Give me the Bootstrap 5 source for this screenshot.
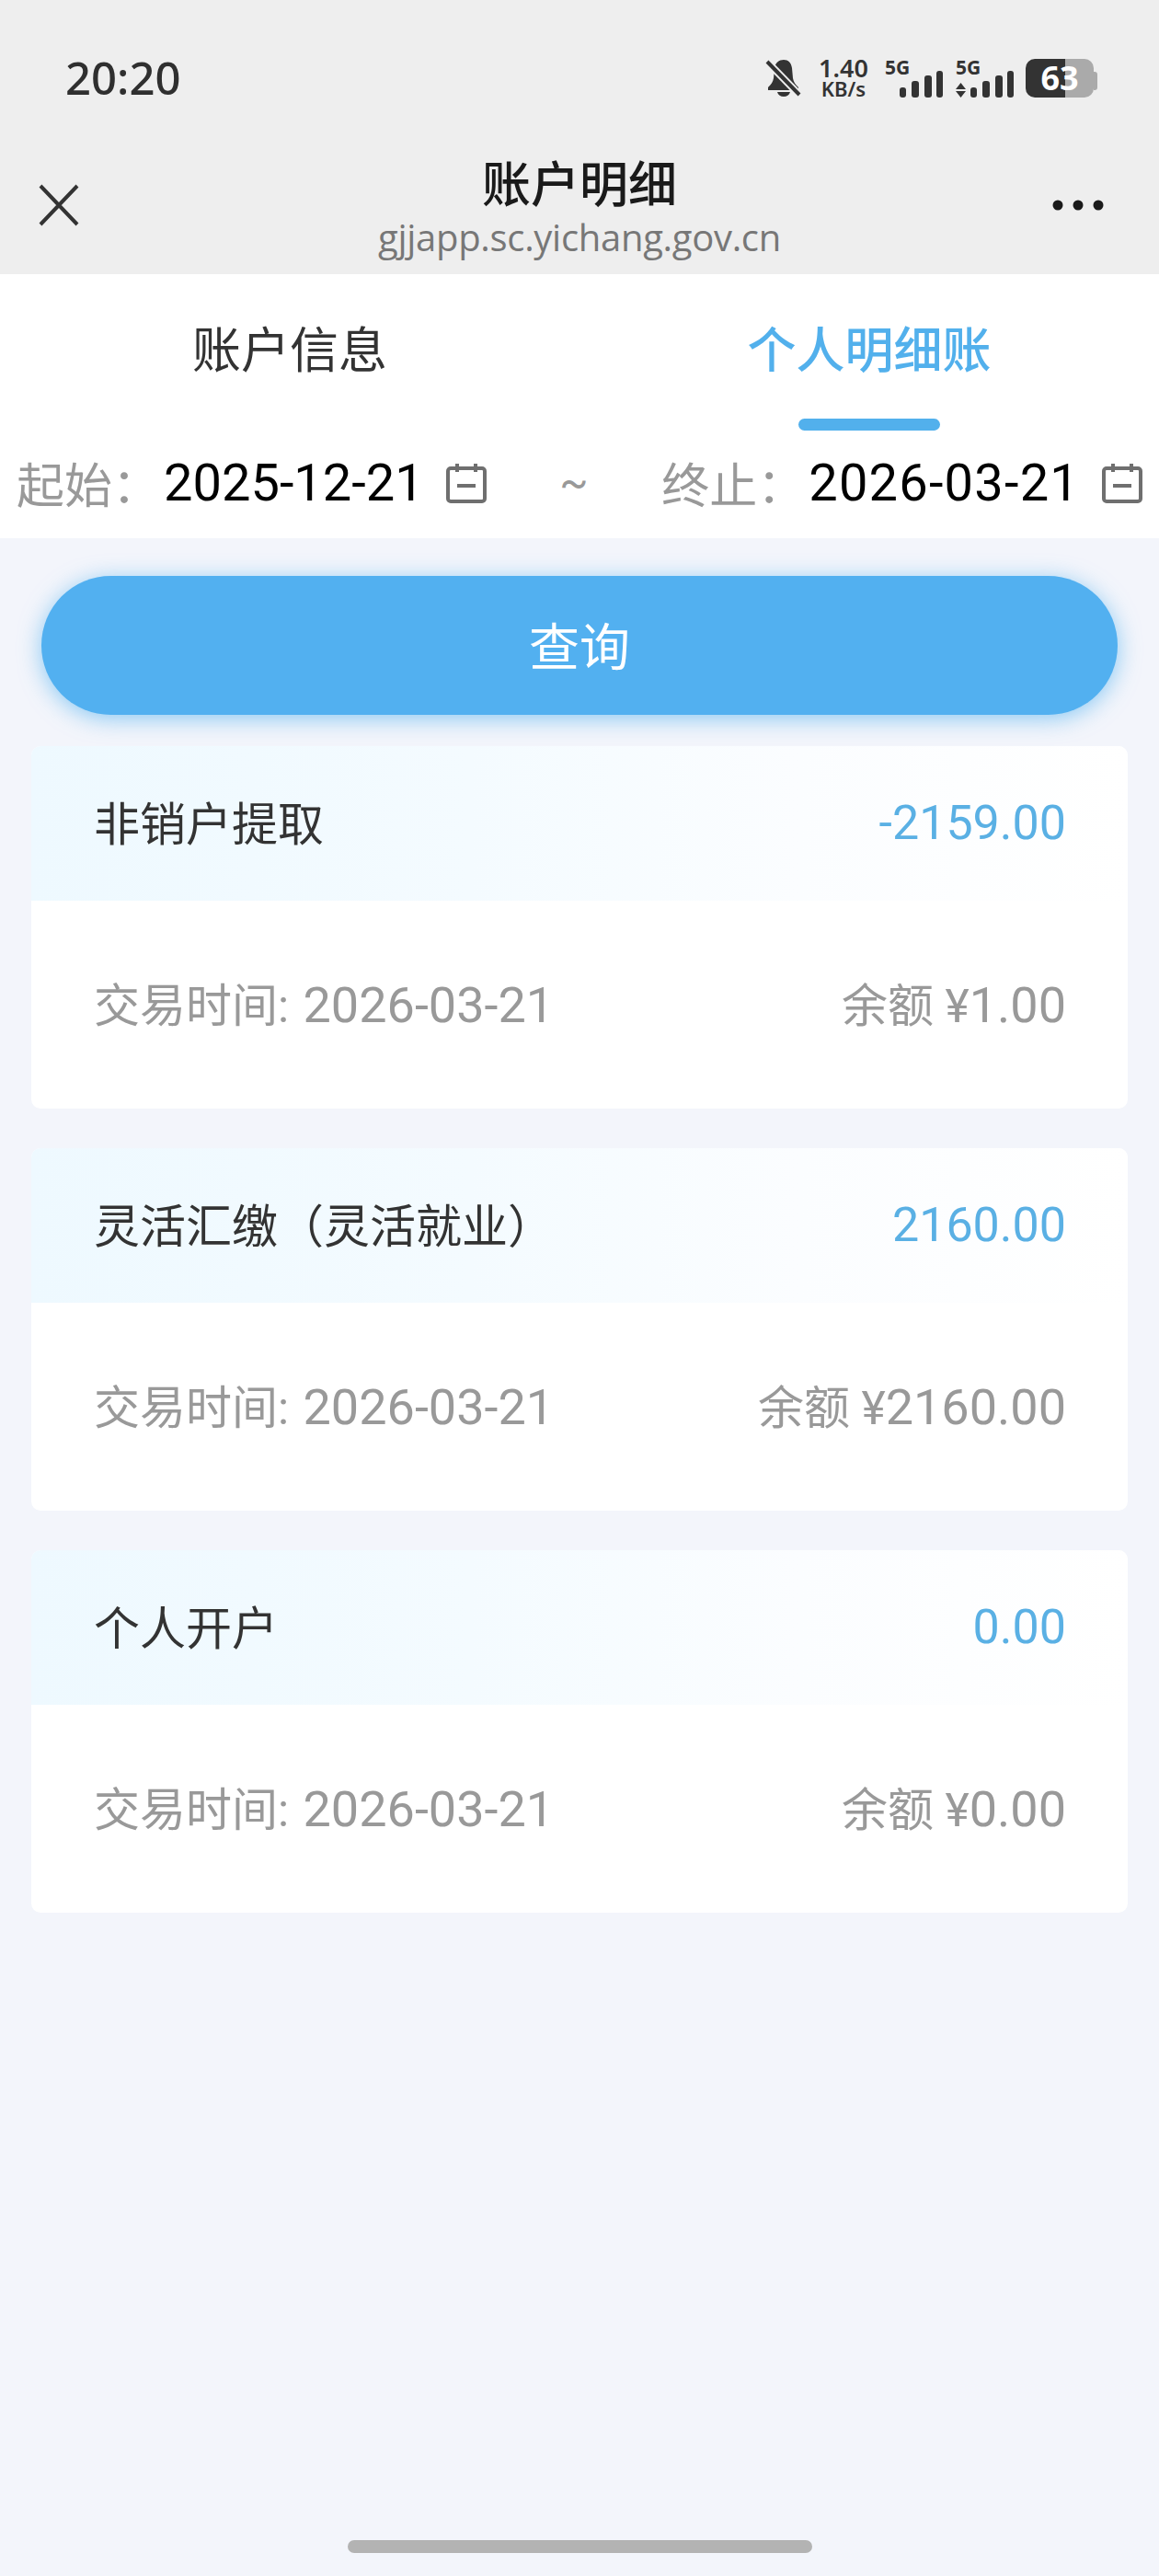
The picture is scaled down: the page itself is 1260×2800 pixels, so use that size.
<!DOCTYPE html>
<html lang="zh-CN">
<head>
  <meta charset="UTF-8" />
  <meta name="viewport" content="width=device-width, initial-scale=1.0"/>
  <title>账户明细</title>
  <link href="https://cdn.jsdelivr.net/npm/bootstrap@5.3.0/dist/css/bootstrap.min.css" rel="stylesheet"/>
  <script src="https://cdn.jsdelivr.net/npm/bootstrap@5.3.0/dist/js/bootstrap.bundle.min.js"></script>
<style>
  body {
    background: #f3f5fb;
    min-height: 2800px;
    font-family: Roboto, "Noto Sans CJK SC", sans-serif;
    display: flex;
    flex-direction: column;
  }

  /* barra de arriba */
  .top-head { background: #eeeeee; height: 298px; }
  .status-row { height: 168px; padding: 0 67px 0 71px; }
  .clock { font: 500 49px/1 "Noto Sans", sans-serif; color: #2f2f2f; }
  .speed { width: 56px; color: #333; text-align: center; font-family: "Noto Sans", sans-serif; font-weight: 600; margin: 0 17px; }
  .speed-num { font-size: 27px; line-height: 24px; }
  .speed-unit { font-size: 22px; line-height: 20px; }
  .sig-icon { overflow: visible; }
  .sig-gap { margin-left: 14px; }
  .battery {
    width: 74px; height: 42px; border-radius: 10px; margin-left: 13px;
    background: linear-gradient(90deg, #333 58%, #aaa 58%);
    color: #fff; font: 700 36px/42px "Noto Sans", sans-serif; text-align: center;
  }
  .battery-nub { width: 4px; height: 20px; background: #aaa; border-radius: 0 3px 3px 0; }
  .nav-row { height: 130px; padding: 0 60px 20px 42px; }
  .close-wrap { width: 74px; }
  .nav-title { font-size: 53px; line-height: 60px; color: #1a1a1a; font-family: "Noto Sans CJK SC", sans-serif; font-weight: 500; margin-bottom: 9px; }
  .nav-url { font: 40px/44px "Open Sans", sans-serif; color: #777; letter-spacing: -0.3px; }

  /* pestañas */
  .tab-row { height: 170px; }
  .tab-item {
    font-family: "Noto Sans CJK SC", sans-serif;
    font-size: 53px; line-height: 60px; color: #333; padding-top: 49px;
  }
  .tab-on { color: #52b0ec; font-weight: 500; }
  .tab-line { width: 154px; height: 13px; border-radius: 7px; background: #52b0ec; margin-top: 48px; }
  .tab-line-off { background: transparent; }

  /* fechas */
  .date-row { height: 117px; padding: 0 18px 4px 18px; }
  .date-label { font-family: "Noto Sans CJK SC", sans-serif; font-size: 52px; color: #999; width: 160px; }
  .date-value { font-size: 56px; color: #000; margin-right: 24px; }
  .date-wide { letter-spacing: 1.2px; }
  .date-sep { font-size: 46px; color: #999; }

  .query-btn {
    height: 151px; border-radius: 76px; border: 0;
    background: #52b0f0; color: #fff;
    font-family: "Noto Sans CJK SC", sans-serif; font-size: 55px;
    box-shadow: 0 4px 24px rgba(82, 176, 240, .65);
    margin: 41px 11px 34px;
    padding-bottom: 10px;
  }
  .query-btn:hover { background: #52b0f0; color: #fff; }

  /* tarjetas */
  .list-wrap { padding: 0 34px; }
  .item-card { border: 0; border-radius: 10px; margin-bottom: 43px; overflow: hidden; height: 394px; }
  .item-head {
    height: 168px; padding: 0 67px 0 68px;
    background: linear-gradient(90deg, #eef9ff 0%, #f4fbff 40%, #fbfdff 70%, #fff 100%);
  }
  .item-name { font-family: "Noto Sans CJK SC", sans-serif; font-size: 50px; color: #333; margin-top: -6px; }
  .item-amount { font-size: 52px; color: #5ab0e4; }
  .item-foot { flex: 1; padding: 0 67px 0 68px; font-size: 50px; color: #999; }
  .foot-num { font-size: 54px; }
  .foot-date { margin-left: 3px; }
  .home-bar { width: 505px; height: 14px; border-radius: 7px; background: #b3b3b3; margin: auto auto 25px; }
</style>
</head>
<body>

<div class="top-head">
  <div class="status-row d-flex justify-content-between align-items-center">
    <div class="clock">20:20</div>
    <div class="d-flex align-items-end">
      <svg width="40" height="42" viewBox="0 0 40 42">
        <path d="M20 1c-5 0-9 3-10 9l-1 11c-.5 4-3 7-6 10v3h33v-3c-3-3-5.500-6-6-10l-1-11C28 4 25 1 20 1z" fill="#333"/>
        <path d="M13 36c1 3.500 3.500 5 7 5s6-1.500 7-5z" fill="#333"/>
        <path d="M2 3l35 36" stroke="#eee" stroke-width="8"/>
        <path d="M2 3l35 36" stroke="#333" stroke-width="4"/>
      </svg>
      <div class="speed">
        <div class="speed-num">1.40</div>
        <div class="speed-unit">KB/s</div>
      </div>
      <svg class="sig-icon" width="63" height="42" viewBox="0 0 63 42">
        <text x="0" y="17" font-family="Noto Sans" font-weight="700" font-size="21" fill="#333">5G</text>
        <rect x="16" y="31" width="7" height="11" rx="3" fill="#333"/>
        <rect x="29" y="24" width="8" height="18" rx="3" fill="#333"/>
        <rect x="43" y="18" width="8" height="24" rx="3" fill="#333"/>
        <rect x="56" y="13" width="7" height="29" rx="3" fill="#333"/>
      </svg>
      <svg class="sig-icon sig-gap" width="63" height="42" viewBox="0 0 63 42">
        <text x="0" y="17" font-family="Noto Sans" font-weight="700" font-size="21" fill="#333">5G</text>
        <path d="M0 33l5.500-7 5.500 7zM0 35l5.500 7 5.500-7z" fill="#333"/>
        <rect x="16" y="31" width="7" height="11" rx="3" fill="#333"/>
        <rect x="29" y="24" width="8" height="18" rx="3" fill="#333"/>
        <rect x="43" y="18" width="8" height="24" rx="3" fill="#333"/>
        <rect x="56" y="13" width="7" height="29" rx="3" fill="#333"/>
      </svg>
      <div class="battery">63</div>
      <div class="battery-nub mb-2"></div>
    </div>
  </div>
  <div class="nav-row d-flex justify-content-between align-items-center">
    <div class="close-wrap">
      <svg class="d-block" width="44" height="46" viewBox="0 0 44 46">
        <path d="M2 2l40 42M42 2L2 44" stroke="#333" stroke-width="4"/>
      </svg>
    </div>
    <div class="text-center">
      <div class="nav-title">账户明细</div>
      <div class="nav-url">gjjapp.sc.yichang.gov.cn</div>
    </div>
    <svg width="56" height="12" viewBox="0 0 56 12">
      <circle cx="6" cy="6" r="5.500" fill="#1a1a1a"/>
      <circle cx="28" cy="6" r="5.500" fill="#1a1a1a"/>
      <circle cx="50" cy="6" r="5.500" fill="#1a1a1a"/>
    </svg>
  </div>
</div>

<div class="bg-white">
  <div class="tab-row d-flex">
    <div class="tab-item w-50 d-flex flex-column align-items-center">
      <span>账户信息</span>
      <span class="tab-line tab-line-off"></span>
    </div>
    <div class="tab-item tab-on w-50 d-flex flex-column align-items-center">
      <span>个人明细账</span>
      <span class="tab-line"></span>
    </div>
  </div>
  <div class="date-row d-flex justify-content-between align-items-center">
    <div class="d-flex align-items-center">
      <span class="date-label">起始：</span>
      <span class="date-value">2025-12-21</span>
      <svg width="44" height="44" viewBox="0 0 44 44" fill="none" stroke="#6f6f6f" stroke-width="4">
        <rect x="2" y="6" width="40" height="36" rx="3"/>
        <path d="M12 1v9M32 1v9M12 25h20"/>
      </svg>
    </div>
    <span class="date-sep">~</span>
    <div class="d-flex align-items-center">
      <span class="date-label">终止：</span>
      <span class="date-value date-wide">2026-03-21</span>
      <svg width="44" height="44" viewBox="0 0 44 44" fill="none" stroke="#6f6f6f" stroke-width="4">
        <rect x="2" y="6" width="40" height="36" rx="3"/>
        <path d="M12 1v9M32 1v9M12 25h20"/>
      </svg>
    </div>
  </div>
</div>

<div class="d-flex flex-column list-wrap">
  <button class="btn query-btn">查询</button>

  <div class="card item-card">
    <div class="item-head d-flex justify-content-between align-items-center">
      <span class="item-name">非销户提取</span>
      <span class="item-amount">-2159.00</span>
    </div>
    <div class="item-foot d-flex justify-content-between align-items-center">
      <span>交易时间: <span class="foot-num foot-date">2026-03-21</span></span>
      <span>余额 ¥<span class="foot-num">1.00</span></span>
    </div>
  </div>

  <div class="card item-card">
    <div class="item-head d-flex justify-content-between align-items-center">
      <span class="item-name">灵活汇缴（灵活就业）</span>
      <span class="item-amount">2160.00</span>
    </div>
    <div class="item-foot d-flex justify-content-between align-items-center">
      <span>交易时间: <span class="foot-num foot-date">2026-03-21</span></span>
      <span>余额 ¥<span class="foot-num">2160.00</span></span>
    </div>
  </div>

  <div class="card item-card">
    <div class="item-head d-flex justify-content-between align-items-center">
      <span class="item-name">个人开户</span>
      <span class="item-amount">0.00</span>
    </div>
    <div class="item-foot d-flex justify-content-between align-items-center">
      <span>交易时间: <span class="foot-num foot-date">2026-03-21</span></span>
      <span>余额 ¥<span class="foot-num">0.00</span></span>
    </div>
  </div>
</div>

<div class="home-bar"></div>

</body>
</html>
